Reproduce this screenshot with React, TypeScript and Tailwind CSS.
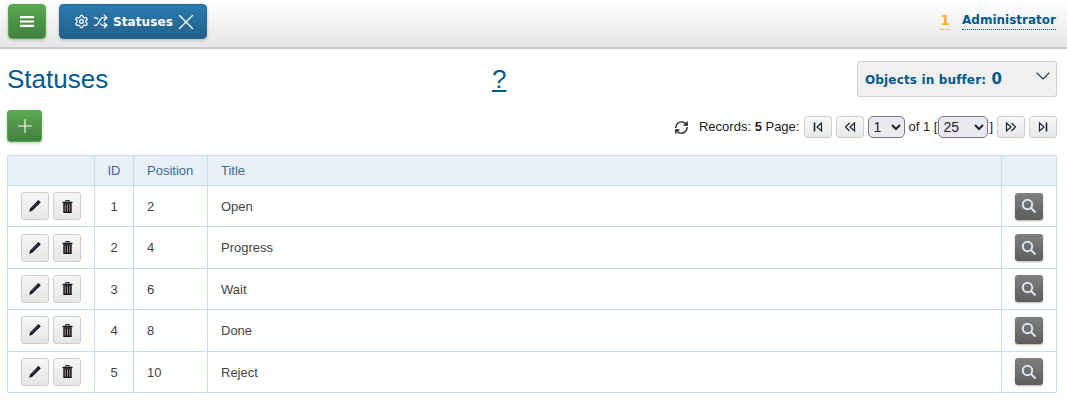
import { ChevronDown, Plus, Settings, Shuffle, X } from 'lucide-react';
import { LuRefreshCw } from 'react-icons/lu';

const rows = [
  { id: 1, position: 2, title: 'Open' },
  { id: 2, position: 4, title: 'Progress' },
  { id: 3, position: 6, title: 'Wait' },
  { id: 4, position: 8, title: 'Done' },
  { id: 5, position: 10, title: 'Reject' },
];

function PagerIcon({ kind }: { kind: 'first' | 'prev' | 'next' | 'last' }) {
  return (
    <svg width="12" height="12" viewBox="0 0 12 12" fill="none" stroke="#16263a" strokeWidth="1.200">
      {kind === 'first' && (
        <>
          <path d="M2.500 1.500v9" strokeWidth="1.600" />
          <path d="M9.500 2 5 6l4.500 4z" />
        </>
      )}
      {kind === 'prev' && (
        <>
          <path d="M5.500 2 1.500 6l4 4" />
          <path d="M10.500 2 6 6l4.500 4z" />
        </>
      )}
      {kind === 'next' && (
        <>
          <path d="M1.500 2 6 6l-4.500 4z" />
          <path d="M6.500 2l4 4-4 4" />
        </>
      )}
      {kind === 'last' && (
        <>
          <path d="M2.500 2 7 6l-4.500 4z" />
          <path d="M9.500 1.500v9" strokeWidth="1.600" />
        </>
      )}
    </svg>
  );
}

function PagerButton({ kind }: { kind: 'first' | 'prev' | 'next' | 'last' }) {
  return (
    <button className="flex h-[22px] w-[28px] items-center justify-center rounded-[3px] border border-[#d0d0d0] bg-gradient-to-b from-[#f8f8f8] to-[#e8e8e8]">
      <PagerIcon kind={kind} />
    </button>
  );
}

function ActionButton({ children }: { children: React.ReactNode }) {
  return (
    <button className="flex h-[28px] w-[28px] items-center justify-center rounded-[3px] border border-[#cfcfcf] bg-gradient-to-b from-[#f6f6f6] to-[#e6e6e6]">
      {children}
    </button>
  );
}

function PencilIcon() {
  return (
    <svg width="14" height="14" viewBox="0 0 14 14">
      <path d="M10.300 1 12.800 3.200 4.500 11.500 1.200 13 2.300 9.300z" fill="#0d1420" />
      <path d="M3.600 9.600 10.400 2.800" stroke="#5f7894" strokeWidth="0.700" />
    </svg>
  );
}

function TrashIcon() {
  return (
    <svg width="11" height="13" viewBox="0 0 11 13">
      <path d="M3.700 1.800V0.600h3.600v1.200" fill="none" stroke="#14141c" strokeWidth="1" />
      <path d="M0.500 1.800h10v1.400h-10z" fill="#14141c" />
      <path d="M1.300 3.200h8.400V13H1.300z" fill="#14141c" />
      <path d="M3.200 4.400v7.200M5.500 4.400v7.200M7.800 4.400v7.200" stroke="#b8a49a" strokeWidth="0.900" />
    </svg>
  );
}

function SearchIcon() {
  return (
    <svg width="16" height="16" viewBox="0 0 16 16" fill="none">
      <circle cx="6.500" cy="6.500" r="4.700" stroke="#d6e6f4" strokeWidth="2" />
      <path d="M10 10l4.500 4.500" stroke="#e8e0d8" strokeWidth="2" />
    </svg>
  );
}

export default function App() {
  return (
    <div className="h-[408px] w-[1067px] overflow-hidden bg-white font-['Liberation_Sans',Arial,sans-serif] text-[13px] text-[#444]">
      <header className="flex h-[49px] items-start border-b-2 border-[#cccccc] bg-gradient-to-b from-white to-[#e6e6e6] pl-[8px] pr-[11px] pt-[4px]">
        <button className="flex h-[35px] w-[38px] items-center justify-center rounded-[4px] border border-[#55a64b] bg-gradient-to-b from-[#5aa950] to-[#437f40] shadow-[0_1px_3px_rgba(0,0,0,0.25)]">
          <svg width="14" height="11" viewBox="0 0 14 11" fill="#fff">
            <path d="M0 0h14v2.200H0zM0 4.400h14v2.200H0zM0 8.800h14V11H0z" />
          </svg>
        </button>
        <div className="ml-[13px] flex h-[35px] w-[148px] items-center rounded-[4px] border border-[#1f6a9d] bg-gradient-to-b from-[#2a7bb0] to-[#246089] pl-[14px] text-white shadow-[0_1px_3px_rgba(0,0,0,0.25)]">
          <Settings size={15} strokeWidth={2} />
          <Shuffle size={15} strokeWidth={2} className="ml-[4px]" />
          <span className="ml-[5px] font-['DejaVu_Sans',sans-serif] text-[12px] font-bold tracking-[0.1px]">Statuses</span>
          <X size={26} strokeWidth={1.2} />
        </div>
        <div className="ml-auto mt-[8px] flex items-start font-['DejaVu_Sans',sans-serif] text-[12px] font-bold">
          <span className="border-b border-dotted border-[#f0a010] font-['DejaVu_Sans',sans-serif] text-[14px] font-bold leading-[17px] text-[#f5b041]">1</span>
          <span className="ml-[12px] border-b border-dotted border-[#005a8c] leading-[17px] text-[#005a8c]">Administrator</span>
        </div>
      </header>

      <div className="flex h-[48px] items-start pl-[7px] pr-[10px]">
        <h1 className="mt-[14px] w-[485px] text-[26px] leading-[32px] text-[#005a8c]">Statuses</h1>
        <a className="mt-[14px] text-[26px] leading-[32px] text-[#005a8c] underline">?</a>
        <div className="ml-auto mt-[12px] flex h-[36px] w-[200px] items-start justify-between rounded-[3px] border border-[#cfcfcf] bg-[#f0f0f0] pl-[7px] pr-[1px] pt-[8px] font-['DejaVu_Sans',sans-serif] text-[12px] font-bold tracking-[0.15px] text-[#005a8c]">
          <span className="leading-[18px]">
            Objects in buffer: <span className="ml-[1px] text-[15px]">0</span>
          </span>
          <ChevronDown size={24} strokeWidth={1.1} color="#1c3a52" className="-mt-[6px]" />
        </div>
      </div>

      <div className="mt-[13px] flex h-[45px] items-start justify-between pl-[7px] pr-[10px]">
        <button className="flex h-[32px] w-[35px] items-center justify-center rounded-[3px] border border-[#55a64b] bg-gradient-to-b from-[#5aa950] to-[#437f40] shadow-[0_1px_3px_rgba(0,0,0,0.25)]">
          <Plus size={22} color="#fff" strokeWidth={1.2} />
        </button>
        <div className="mt-[6px] flex h-[22px] items-center text-[13px] text-[#222]">
          <LuRefreshCw size={15} color="#222" strokeWidth={2.2} />
          <span className="ml-[10px]">
            Records: <b>5</b> Page:
          </span>
          <div className="ml-[5px]"><PagerButton kind="first" /></div>
          <div className="ml-[4px]"><PagerButton kind="prev" /></div>
          <select className="ml-[4px] h-[22px] w-[37px] rounded-[5px] border border-[#77778a] bg-[#e9e9ef] text-[14px] text-[#223]" defaultValue="1">
            <option>1</option>
          </select>
          <span className="ml-[3px] mr-[1px]">of 1 [</span>
          <select className="h-[22px] w-[50px] rounded-[5px] border border-[#77778a] bg-[#e9e9ef] text-[14px] text-[#223]" defaultValue="25">
            <option>25</option>
          </select>
          <span className="ml-[1px]">]</span>
          <div className="ml-[4px]"><PagerButton kind="next" /></div>
          <div className="ml-[4px]"><PagerButton kind="last" /></div>
        </div>
      </div>

      <div className="pl-[7px] pr-[10px]">
        <table className="w-[1050px] table-fixed border-collapse">
          <colgroup>
            <col className="w-[87px]" />
            <col className="w-[39px]" />
            <col className="w-[74px]" />
            <col />
            <col className="w-[55px]" />
          </colgroup>
          <thead>
            <tr className="h-[30px] bg-[#e8f1f9] text-left text-[#3f6a90]">
              <th className="border border-[#c9dce9]"></th>
              <th className="border border-[#c9dce9] text-center font-normal">ID</th>
              <th className="border border-[#c9dce9] pl-[13px] font-normal">Position</th>
              <th className="border border-[#c9dce9] pl-[13px] font-normal">Title</th>
              <th className="border border-[#c9dce9]"></th>
            </tr>
          </thead>
          <tbody>
            {rows.map((row) => (
              <tr key={row.id} className="h-[41.400px]">
                <td className="border border-[#c9dce9]">
                  <div className="flex justify-center gap-[4px]">
                    <ActionButton>
                      <PencilIcon />
                    </ActionButton>
                    <ActionButton>
                      <TrashIcon />
                    </ActionButton>
                  </div>
                </td>
                <td className="border border-[#c9dce9] pt-[1px] text-center">{row.id}</td>
                <td className="border border-[#c9dce9] pl-[13px] pt-[1px]">{row.position}</td>
                <td className="border border-[#c9dce9] pl-[13px] pt-[1px]">{row.title}</td>
                <td className="border border-[#c9dce9]">
                  <div className="flex justify-center">
                    <button className="flex h-[27px] w-[28px] items-center justify-center rounded-[3px] bg-gradient-to-b from-[#808080] to-[#5d5d5d] shadow-[0_1px_2px_rgba(0,0,0,0.3)]">
                      <SearchIcon />
                    </button>
                  </div>
                </td>
              </tr>
            ))}
          </tbody>
        </table>
      </div>
    </div>
  );
}
